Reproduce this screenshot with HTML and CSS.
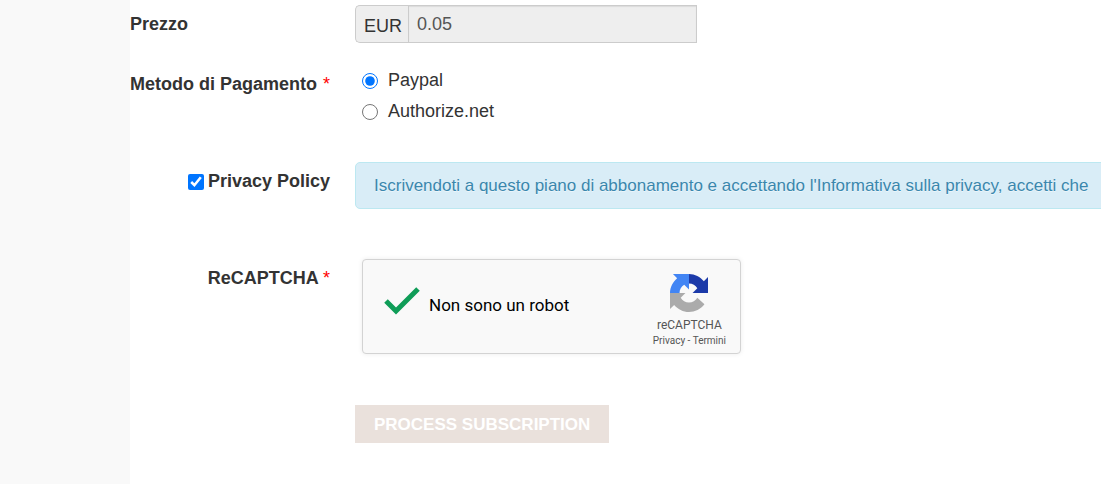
FILE: index.html
```html
<!DOCTYPE html>
<html lang="it">
<head>
    <meta charset="UTF-8">
    <meta name="viewport" content="width=device-width, initial-scale=1.0">
    <title>Abbonamento</title>
    <link rel="stylesheet" href="styles.css">
</head>
<body>
    <div class="page">
        <div class="side"></div>
        <form class="subscription-form">
            <div class="form-row price-row">
                <label class="form-label" for="price">Prezzo</label>
                <div class="input-prepend">
                    <span class="add-on">EUR</span>
                    <input type="text" id="price" value="0.05" readonly>
                </div>
            </div>

            <div class="form-row payment-row" role="radiogroup" aria-labelledby="paymentLabel">
                <div class="form-label spread" id="paymentLabel">Metodo di Pagamento <span class="required">*</span></div>
                <div class="radio-group">
                    <label><input type="radio" name="payment" value="paypal" checked> Paypal</label>
                    <label><input type="radio" name="payment" value="authnet"> Authorize.net</label>
                </div>
            </div>

            <div class="form-row privacy-row">
                <label class="form-label right"><input type="checkbox" checked> Privacy Policy</label>
                <div class="alert">Iscrivendoti a questo piano di abbonamento e accettando l'Informativa sulla privacy, accetti che</div>
            </div>

            <div class="form-row captcha-row">
                <div class="form-label right">ReCAPTCHA <span class="required">*</span></div>
                <div class="captcha">
                    <svg class="check" viewBox="0 0 36 28" aria-hidden="true">
                        <path d="M2 14L12 24L34 2" fill="none" stroke="#0f9d58" stroke-width="5"/>
                    </svg>
                    <span class="captcha-text">Non sono un robot</span>
                    <div class="captcha-brand">
                        <svg class="logo" viewBox="0 0 64 64" aria-hidden="true">
                            <path fill="#1c3aa9" d="M32 0C42 0 51 5 57 12L64 5V32H38L46 24C43 19 38 16 32 16Z"/>
                            <path fill="#4285f4" d="M32 0V26L24 18C19 21 16 26 16 32H0C0 22 5 13 12 7L5 0Z"/>
                            <path fill="#ababab" d="M0 32H26L18 40C21 45 26 48 32 48C38 48 43 45 46 40L58 51C52 59 42 64 32 64C22 64 13 59 7 52L0 59Z"/>
                        </svg>
                        <div class="brand-name">reCAPTCHA</div>
                        <div class="brand-links"><a href="#">Privacy</a> - <a href="#">Termini</a></div>
                    </div>
                </div>
            </div>

            <button type="submit">PROCESS SUBSCRIPTION</button>
        </form>
    </div>
</body>
</html>
```

FILE: styles.css
```css
/* Global Styles */
* {
    box-sizing: border-box;
}

body {
    margin: 0;
    font-family: "Liberation Sans", Arial, sans-serif;
    font-size: 18px;
    line-height: 25px;
    color: #333;
    background: #fff;
    overflow-x: hidden;
}

.page {
    display: flex;
    min-height: 100vh;
}

.side {
    flex: 0 0 130px;
    background: #f9f9f9;
}

.subscription-form {
    flex: 1;
    min-width: 0;
    padding-top: 5px;
}

/* Rows */
.form-row {
    display: flex;
    gap: 25px;
    align-items: flex-start;
}

.form-label {
    flex: 0 0 200px;
    padding-top: 7px;
    font-weight: bold;
    white-space: nowrap;
}

.form-label.spread {
    display: flex;
    justify-content: space-between;
}

.form-label.right {
    text-align: right;
}

.required {
    color: #f00;
    font-weight: normal;
}

.price-row {
    margin-bottom: 22px;
}

.payment-row {
    margin-bottom: 35px;
}

.privacy-row {
    margin-bottom: 50px;
}

.captcha-row {
    margin-bottom: 51px;
}

/* Price */
.input-prepend {
    display: flex;
    height: 38px;
}

.add-on {
    padding: 8px 6px 0 8px;
    border: 1px solid #ccc;
    border-right: none;
    border-radius: 5px 0 0 5px;
    background: #eee;
}

.input-prepend input {
    width: 289px;
    padding: 0 8px;
    border: 1px solid #ccc;
    border-radius: 0;
    background: #eee;
    color: #555;
    font: inherit;
    box-shadow: inset 0 1px 1px rgba(0, 0, 0, 0.08);
}

/* Radios and checkbox */
input[type="radio"],
input[type="checkbox"] {
    width: 16px;
    height: 16px;
    margin: 0;
    accent-color: #0075ff;
}

.radio-group label {
    display: flex;
    align-items: center;
    gap: 10px;
    height: 31px;
    padding-left: 7px;
}

.privacy-row .form-label {
    display: flex;
    align-items: center;
    justify-content: flex-end;
    gap: 4px;
}

.alert {
    flex: 1 0 auto;
    padding: 10px 18px;
    border: 1px solid #bce8f1;
    border-radius: 5px;
    background: #d9edf7;
    color: #3a87ad;
    font-size: 17px;
    text-shadow: 0 1px 0 rgba(255, 255, 255, 0.5);
    white-space: nowrap;
}

/* Captcha box */
.captcha {
    display: flex;
    width: 379px;
    height: 95px;
    margin-left: 7px;
    padding: 14px 14px 0 21px;
    border: 1px solid #d3d3d3;
    border-radius: 4px;
    background: #f9f9f9;
    box-shadow: 0 0 5px rgba(0, 0, 0, 0.08);
    font-family: Roboto, sans-serif;
}

.check {
    width: 36px;
    height: 28px;
    margin-top: 13px;
}

.captcha-text {
    margin: 19px auto 0 9px;
    color: #000;
    font-size: 17px;
}

.captcha-brand {
    color: #555;
    text-align: center;
}

.logo {
    display: block;
    width: 38px;
    height: 38px;
    margin: 0 auto;
}

.brand-name {
    padding-top: 4px;
    font-size: 12px;
    line-height: 18px;
}

.brand-links {
    font-size: 10px;
    line-height: 14px;
}

.brand-links a {
    color: #555;
    text-decoration: none;
}

button {
    margin-left: 225px;
    padding: 7px 19px 6px;
    border: none;
    background: #eae1dc;
    color: #fff;
    font: inherit;
    font-size: 17px;
    font-weight: bold;
    cursor: pointer;
}
```
